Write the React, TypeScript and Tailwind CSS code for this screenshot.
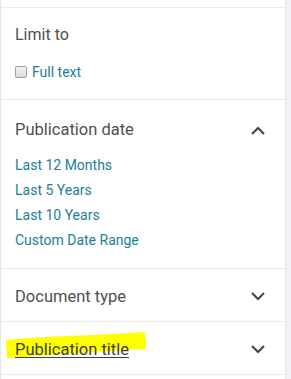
import React from 'react';

const font = { fontFamily: 'Roboto, "Liberation Sans", sans-serif' };

function Chevron({ up }: { up?: boolean }) {
  return (
    <svg width="14" height="9" viewBox="0 0 14 9" className="text-[#444]">
      <path
        d={up ? 'M1 8 L7 2 L13 8' : 'M1 1 L7 7 L13 1'}
        fill="none"
        stroke="currentColor"
        strokeWidth="2"
      />
    </svg>
  );
}

const links = ['Last 12 Months', 'Last 5 Years', 'Last 10 Years', 'Custom Date Range'];

export default function App() {
  return (
    <div className="w-[291px] h-[379px] bg-[#f3f1f5] overflow-hidden" style={font}>
      <div className="w-[286px] h-full bg-white border-l border-r border-[#e6e6e6] flex flex-col">
        <div className="h-[8px] border-b border-[#ececec]" />

        {/* Limit to */}
        <div className="h-[92px] border-b border-[#ececec] pl-[14px] pt-[16px]">
          <div className="text-[16px] leading-[22px] text-[#4f4f4f]">Limit to</div>
          <label className="mt-[18px] flex items-center gap-[5px]">
            <span className="w-[12px] h-[12px] rounded-[2px] border border-[#a0a0a0] bg-gradient-to-b from-[#f4f4f4] to-[#dcdcdc]" />
            <span className="text-[14px] leading-[16px] text-[#1d7e97]">Full text</span>
          </label>
        </div>

        {/* Publication date */}
        <div className="h-[169px] border-b border-[#ececec] pl-[14px] pr-[20px] pt-[19px]">
          <div className="flex items-center justify-between">
            <span className="text-[16.5px] leading-[22px] text-[#4f4f4f]">Publication date</span>
            <Chevron up />
          </div>
          <div className="mt-[12px] flex flex-col">
            {links.map((l) => (
              <span key={l} className="text-[14px] leading-[25px] text-[#1d7e97]">
                {l}
              </span>
            ))}
          </div>
        </div>

        {/* Document type */}
        <div className="h-[53px] border-b border-[#ececec] pl-[14px] pr-[20px] pt-[3px] flex items-center justify-between">
          <span className="text-[16.5px] leading-[22px] text-[#4f4f4f]">Document type</span>
          <Chevron />
        </div>

        {/* Publication title */}
        <div className="relative h-[53px] border-b border-[#ececec] pl-[14px] pr-[20px] pt-[3px] flex items-center justify-between">
          <svg className="absolute left-[4px] top-[10px]" width="142" height="27" viewBox="0 0 142 27">
            <path d="M1 8 C30 5 60 4 90 3 L140 0 L141 17 C100 19 60 22 30 24 L2 26 Z" fill="#ffff00" />
          </svg>
          <span className="relative text-[16.5px] leading-[22px] text-[#3d3d3d] underline underline-offset-[2px]">
            Publication title
          </span>
          <Chevron />
        </div>
      </div>
    </div>
  );
}
